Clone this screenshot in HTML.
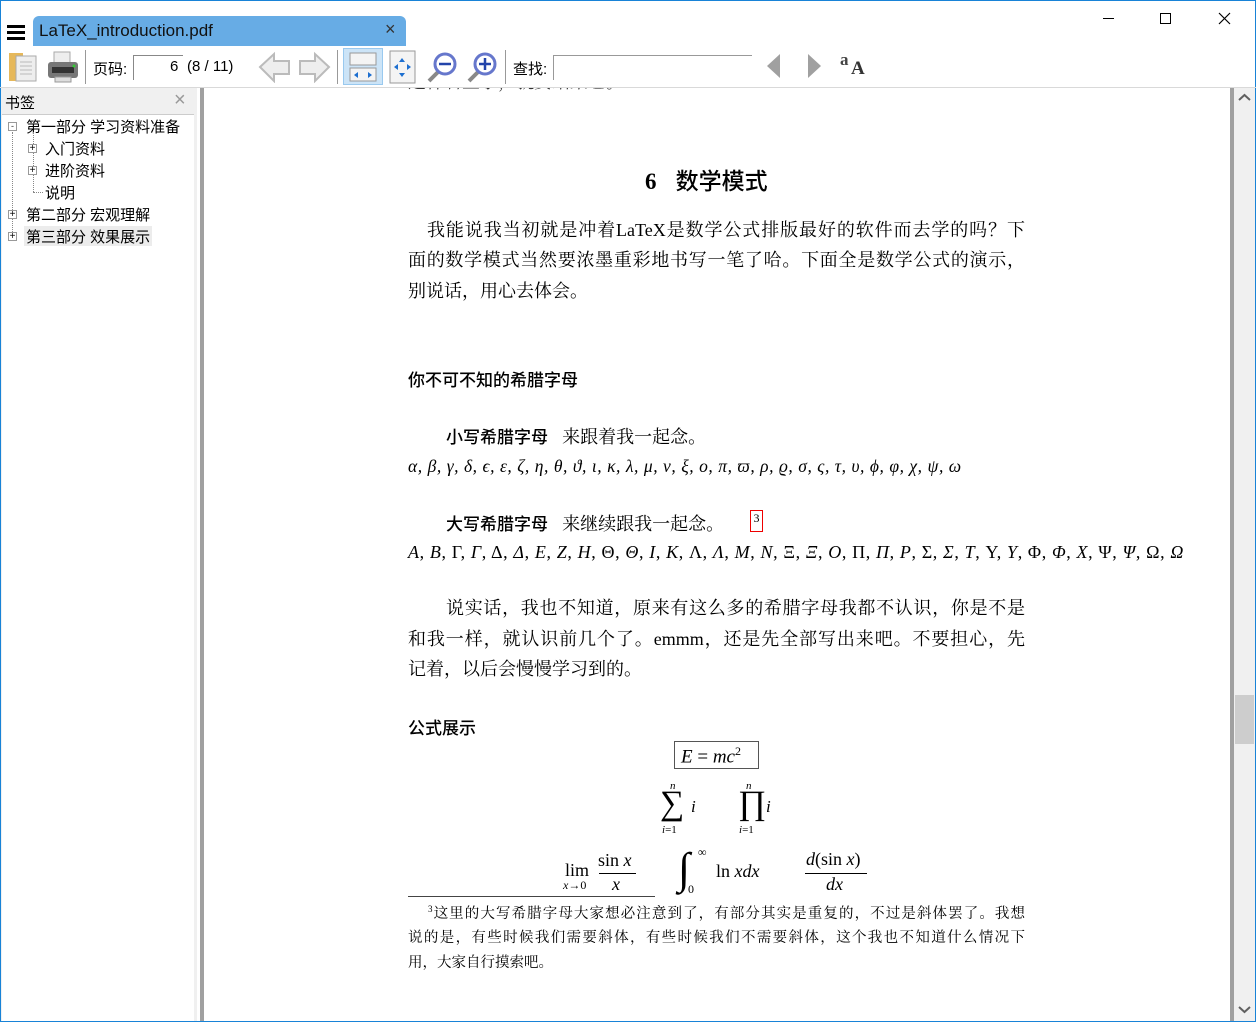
<!DOCTYPE html>
<html><head><meta charset="utf-8"><style>
*{margin:0;padding:0;box-sizing:border-box}
body{width:1256px;height:1022px;overflow:hidden;background:#fff;position:relative;font-family:"Liberation Sans","Noto Sans CJK SC",sans-serif;font-size:14px;color:#000}
.a{position:absolute;white-space:nowrap}
.ser{font-family:"Liberation Serif","Noto Serif CJK SC",serif}
.bd{font-family:"Noto Sans CJK SC",sans-serif;font-weight:500}
.m{font-family:"Liberation Serif",serif;font-style:italic}
.r{font-family:"Liberation Serif",serif}
.ln{position:absolute;left:408px;width:617px;font-size:18px;text-align:justify;text-align-last:justify;white-space:nowrap;line-height:22px}
.sb{font-size:15px}
</style></head><body>
<div class="a" style="left:0;top:0;width:1px;height:1022px;background:#1883d7"></div>
<div class="a" style="left:1255px;top:0;width:1px;height:1022px;background:#1883d7"></div>
<div class="a" style="left:0;top:0;width:1256px;height:1px;background:#1883d7"></div>
<div class="a" style="left:0;top:1021px;width:1256px;height:1px;background:#1883d7"></div>
<div class="a" style="left:7px;top:25px;width:18px;height:3px;background:#000"></div>
<div class="a" style="left:7px;top:31px;width:18px;height:3px;background:#000"></div>
<div class="a" style="left:7px;top:37px;width:18px;height:3px;background:#000"></div>
<div class="a" style="left:33px;top:16px;width:373px;height:30px;background:#67ace5;border-radius:6px 6px 0 0"></div>
<div class="a" style="left:39px;top:21px;font-size:17px;color:#111">LaTeX_introduction.pdf</div>
<div class="a" style="left:385px;top:19px;font-size:18px;color:#333">×</div>
<div class="a" style="left:1103px;top:18px;width:11px;height:1px;background:#000"></div>
<div class="a" style="left:1160px;top:13px;width:11px;height:11px;border:1px solid #000"></div>
<svg class="a" style="left:1218px;top:12px" width="13" height="13"><path d="M1 1L12 12M12 1L1 12" stroke="#000" stroke-width="1.2"/></svg>
<svg class="a" style="left:8px;top:50px" width="32" height="34"><rect x="1" y="3" width="14" height="28" fill="#e6b85a"/><rect x="8" y="6" width="20" height="25" fill="#eee" stroke="#aaa"/><path d="M12 12h12M12 16h12M12 20h12M12 24h12" stroke="#bbb"/></svg>
<svg class="a" style="left:46px;top:50px" width="34" height="34"><rect x="8" y="2" width="16" height="12" fill="#eee" stroke="#aaa"/><rect x="2" y="12" width="30" height="16" rx="3" fill="#777"/><rect x="6" y="17" width="22" height="6" fill="#333"/><rect x="9" y="27" width="16" height="5" fill="#ddd" stroke="#999"/><circle cx="28" cy="16" r="1.5" fill="#3c3"/></svg>
<div class="a" style="left:85px;top:50px;width:1px;height:34px;background:#999"></div>
<div class="a" style="left:93px;top:58px;font-size:15px">页码:</div>
<div class="a" style="left:133px;top:55px;width:50px;height:25px;border-top:1px solid #888;border-left:1px solid #888"></div>
<div class="a" style="left:170px;top:58px;font-size:15px">6</div>
<div class="a" style="left:187px;top:58px;font-size:15px">(8 / 11)</div>
<svg class="a" style="left:258px;top:51px" width="34" height="32"><path d="M2 16L16 3V10H31V23H16V30Z" fill="#eee" stroke="#bbb" stroke-width="2"/></svg>
<svg class="a" style="left:297px;top:51px" width="34" height="32"><path d="M32 16L18 3V10H3V23H18V30Z" fill="#eee" stroke="#bbb" stroke-width="2"/></svg>
<div class="a" style="left:337px;top:50px;width:1px;height:34px;background:#999"></div>
<div class="a" style="left:343px;top:48px;width:40px;height:37px;background:#cce4f7;border:1px solid #99c9ef"></div>
<svg class="a" style="left:349px;top:52px" width="28" height="30"><rect x="1" y="1" width="26" height="12" fill="#f4f4f4" stroke="#999"/><rect x="1" y="16" width="26" height="13" fill="#f4f4f4" stroke="#999"/><path d="M5 23l4-3v6zM23 23l-4-3v6z" fill="#1d6fd0"/></svg>
<svg class="a" style="left:389px;top:50px" width="28" height="34"><rect x="1" y="1" width="25" height="32" fill="#f4f4f4" stroke="#999"/><path d="M13 8l-3 4h6zM13 27l-3-4h6zM5 17l4-3v6zM22 17l-4-3v6z" fill="#1d6fd0"/></svg>
<svg class="a" style="left:425px;top:50px" width="34" height="34"><path d="M4 31L14 21" stroke="#888" stroke-width="4"/><circle cx="20" cy="14" r="10" fill="#fff" stroke="#6677cc" stroke-width="3"/><path d="M14 14h12" stroke="#2244aa" stroke-width="2.5"/></svg>
<svg class="a" style="left:465px;top:50px" width="34" height="34"><path d="M4 31L14 21" stroke="#888" stroke-width="4"/><circle cx="20" cy="14" r="10" fill="#fff" stroke="#6677cc" stroke-width="3"/><path d="M14 14h12M20 8v12" stroke="#2244aa" stroke-width="2.5"/></svg>
<div class="a" style="left:505px;top:50px;width:1px;height:34px;background:#999"></div>
<div class="a" style="left:513px;top:58px;font-size:15px">查找:</div>
<div class="a" style="left:553px;top:55px;width:199px;height:25px;border-top:1px solid #999;border-left:1px solid #999"></div>
<svg class="a" style="left:766px;top:53px" width="16" height="26"><path d="M14 1V25L1 13Z" fill="#a0a0a0"/></svg>
<svg class="a" style="left:806px;top:53px" width="16" height="26"><path d="M2 1V25L15 13Z" fill="#a0a0a0"/></svg>
<div class="a" style="left:840px;top:50px;font-size:17px;font-weight:bold;color:#444;font-family:'Liberation Serif',serif">a</div>
<div class="a" style="left:851px;top:58px;font-size:19px;font-weight:bold;color:#333;font-family:'Liberation Serif',serif">A</div>
<div class="a" style="left:0;top:87px;width:1256px;height:1px;background:#d9d9d9"></div>
<div class="a" style="left:1px;top:88px;width:196px;height:933px;background:#f0f0f0"></div>
<div class="a" style="left:5px;top:92px;font-size:15px">书签</div>
<div class="a" style="left:174px;top:89px;font-size:20px;color:#999">×</div>
<div class="a" style="left:2px;top:114px;width:192px;height:907px;background:#fff;border-top:1px solid #ccc"></div>
<div class="a" style="left:8px;top:122px;width:9px;height:9px;border:1px solid #999;font-size:9px;line-height:6px;text-align:center;color:#333">-</div>
<div class="a sb" style="left:26px;top:116px">第一部分 学习资料准备</div>
<div class="a" style="left:33px;top:132px;width:1px;height:60px;border-left:1px dotted #888"></div>
<div class="a" style="left:12px;top:132px;width:1px;height:106px;border-left:1px dotted #888"></div>
<div class="a" style="left:33px;top:192px;width:10px;border-top:1px dotted #888"></div>
<div class="a" style="left:28px;top:144px;width:9px;height:9px;border:1px solid #999;background:#fff;font-size:10px;line-height:7px;text-align:center">+</div>
<div class="a sb" style="left:45px;top:138px">入门资料</div>
<div class="a" style="left:28px;top:166px;width:9px;height:9px;border:1px solid #999;background:#fff;font-size:10px;line-height:7px;text-align:center">+</div>
<div class="a sb" style="left:45px;top:160px">进阶资料</div>
<div class="a sb" style="left:45px;top:182px">说明</div>
<div class="a" style="left:8px;top:210px;width:9px;height:9px;border:1px solid #999;background:#fff;font-size:10px;line-height:7px;text-align:center">+</div>
<div class="a sb" style="left:26px;top:204px">第二部分 宏观理解</div>
<div class="a" style="left:24px;top:226px;width:128px;height:20px;background:#ececec"></div>
<div class="a" style="left:8px;top:232px;width:9px;height:9px;border:1px solid #999;background:#fff;font-size:10px;line-height:7px;text-align:center">+</div>
<div class="a sb" style="left:26px;top:226px">第三部分 效果展示</div>
<div class="a" style="left:194px;top:88px;width:3px;height:933px;background:#f0f0f0"></div>
<div class="a" style="left:200px;top:88px;width:4px;height:933px;background:#a0a0a0"></div>
<div class="a" style="left:1230px;top:88px;width:4px;height:933px;background:#a0a0a0"></div>
<div class="a" style="left:1234px;top:88px;width:21px;height:933px;background:#f0f0f0"></div>
<div class="a" style="left:1235px;top:695px;width:19px;height:49px;background:#cdcdcd"></div>
<svg class="a" style="left:1238px;top:93px" width="13" height="9"><path d="M1 7L6.5 2L12 7" stroke="#606060" stroke-width="2" fill="none"/></svg>
<svg class="a" style="left:1238px;top:1005px" width="13" height="9"><path d="M1 2L6.5 7L12 2" stroke="#606060" stroke-width="2" fill="none"/></svg>
<div class="a" style="left:408px;top:88px;width:300px;height:4px;overflow:hidden"><div class="ser" style="margin-top:-16px;font-size:18px;color:#333;line-height:20px">这样看空了，就安结束它。</div></div>
<div class="a" style="left:645px;top:162px;font-size:23px"><span class="r" style="font-weight:bold">6</span>&nbsp;&nbsp;&nbsp;<span class="bd">数学模式</span></div>
<div class="ln ser" style="top:219px;left:427px;width:598px">我能说我当初就是冲着LaTeX是数学公式排版最好的软件而去学的吗？下</div>
<div class="ln ser" style="top:249px">面的数学模式当然要浓墨重彩地书写一笔了哈。下面全是数学公式的演示，</div>
<div class="a ser" style="left:408px;top:280px;font-size:18px;line-height:22px">别说话，用心去体会。</div>
<div class="a bd" style="left:408px;top:366px;font-size:17px">你不可不知的希腊字母</div>
<div class="a" style="left:446px;top:423px;font-size:17px"><span class="bd">小写希腊字母</span>&nbsp;&nbsp;&nbsp;<span class="ser" style="font-size:18px">来跟着我一起念。</span></div>
<div class="a m" style="left:408px;top:456px;font-size:17.5px;letter-spacing:0.55px">α, β, γ, δ, ϵ, ε, ζ, η, θ, ϑ, ι, κ, λ, μ, ν, ξ, ο, π, ϖ, ρ, ϱ, σ, ς, τ, υ, ϕ, φ, χ, ψ, ω</div>
<div class="a" style="left:446px;top:510px;font-size:17px"><span class="bd">大写希腊字母</span>&nbsp;&nbsp;&nbsp;<span class="ser" style="font-size:18px">来继续跟我一起念。</span></div>
<div class="a r" style="left:750px;top:510px;width:13px;height:22px;border:1px solid #e00;font-size:12px;text-align:center;line-height:14px">3</div>
<div class="a r" style="left:408px;top:542px;font-size:18px;letter-spacing:0.62px"><i>A</i>, <i>B</i>, Γ, <i>Γ</i>, Δ, <i>Δ</i>, <i>E</i>, <i>Z</i>, <i>H</i>, Θ, <i>Θ</i>, <i>I</i>, <i>K</i>, Λ, <i>Λ</i>, <i>M</i>, <i>N</i>, Ξ, <i>Ξ</i>, <i>O</i>, Π, <i>Π</i>, <i>P</i>, Σ, <i>Σ</i>, <i>T</i>, Υ, <i>Υ</i>, Φ, <i>Φ</i>, <i>X</i>, Ψ, <i>Ψ</i>, Ω, <i>Ω</i></div>
<div class="ln ser" style="top:597px;left:446px;width:579px">说实话，我也不知道，原来有这么多的希腊字母我都不认识，你是不是</div>
<div class="ln ser" style="top:628px">和我一样，就认识前几个了。emmm，还是先全部写出来吧。不要担心，先</div>
<div class="a ser" style="left:408px;top:658px;font-size:18px;line-height:22px">记着，以后会慢慢学习到的。</div>
<div class="a bd" style="left:408px;top:714px;font-size:17px">公式展示</div>
<div class="a" style="left:674px;top:741px;width:85px;height:28px;border:1px solid #555"></div>
<div class="a r" style="left:681px;top:744px;font-size:19px"><i>E</i> = <i>mc</i><sup style="font-size:12px">2</sup></div>
<div class="a m" style="left:670px;top:780px;font-size:11px">n</div>
<div class="a r" style="left:660px;top:784px;font-size:34px;line-height:40px">∑</div>
<div class="a m" style="left:691px;top:797px;font-size:17px">i</div>
<div class="a m" style="left:662px;top:824px;font-size:11px">i<span class="r" style="font-style:normal">=1</span></div>
<div class="a m" style="left:746px;top:780px;font-size:11px">n</div>
<div class="a r" style="left:738px;top:784px;font-size:34px;line-height:40px">∏</div>
<div class="a m" style="left:766px;top:797px;font-size:17px">i</div>
<div class="a m" style="left:739px;top:824px;font-size:11px">i<span class="r" style="font-style:normal">=1</span></div>
<div class="a r" style="left:565px;top:860px;font-size:18px">lim</div>
<div class="a m" style="left:563px;top:878px;font-size:12px">x<span class="r" style="font-style:normal">→0</span></div>
<div class="a r" style="left:598px;top:850px;font-size:18px">sin <i>x</i></div>
<div class="a" style="left:599px;top:873px;width:37px;height:1px;background:#000"></div>
<div class="a m" style="left:612px;top:874px;font-size:18px">x</div>
<div class="a r" style="left:678px;top:844px;font-size:44px;font-style:italic;line-height:50px">∫</div>
<div class="a r" style="left:698px;top:845px;font-size:12px">∞</div>
<div class="a r" style="left:688px;top:882px;font-size:12px">0</div>
<div class="a r" style="left:716px;top:861px;font-size:18px">ln <i>xdx</i></div>
<div class="a r" style="left:806px;top:849px;font-size:18px"><i>d</i>(sin <i>x</i>)</div>
<div class="a" style="left:805px;top:873px;width:62px;height:1px;background:#000"></div>
<div class="a m" style="left:826px;top:874px;font-size:18px">dx</div>
<div class="a" style="left:408px;top:896px;width:247px;height:1px;background:#444"></div>
<div class="ln ser" style="top:903px;font-size:14.5px;left:428px;width:597px"><sup style="font-size:9px;line-height:0;vertical-align:6px">3</sup>这里的大写希腊字母大家想必注意到了，有部分其实是重复的，不过是斜体罢了。我想</div>
<div class="ln ser" style="top:927px;font-size:14.5px">说的是，有些时候我们需要斜体，有些时候我们不需要斜体，这个我也不知道什么情况下</div>
<div class="a ser" style="left:408px;top:952px;font-size:14.5px;line-height:22px">用，大家自行摸索吧。</div>
</body></html>
